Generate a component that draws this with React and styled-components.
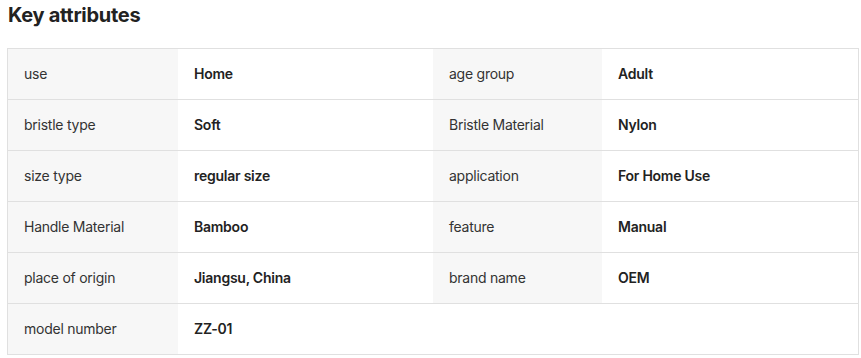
import React from "react";
import styled, { createGlobalStyle } from "styled-components";

const GlobalStyle = createGlobalStyle`
	body {
		margin: 0;
		background: #ffffff;
		font-family: Inter, "Noto Sans", sans-serif;
		color: #222222;
	}
`;

const Wrap = styled.div`
	padding: 0 4px 0 7px;
`;

const Title = styled.h2`
	margin: 0;
	padding: 2px 0 0 1px;
	font-size: 20px;
	line-height: 26px;
	font-weight: 700;
	color: #222222;
	letter-spacing: -0.3px;
`;

const Table = styled.div`
	margin-top: 20px;
	width: 850px;
	border: 1px solid #e0e0e0;
	border-bottom: none;
	display: grid;
	grid-template-columns: 170px 255px 169px 1fr;
`;

const Cell = styled.div`
	height: 50px;
	display: flex;
	align-items: center;
	padding: 0 0 2px 16px;
	box-sizing: border-box;
	height: 51px;
	font-size: 14px;
	letter-spacing: -0.25px;
	border-bottom: 1px solid #e0e0e0;
	background: ${p => (p.$label ? "#f7f7f7" : "#ffffff")};
	color: ${p => (p.$label ? "#333333" : "#222222")};
	font-weight: ${p => (p.$label ? 400 : 600)};
`;

const rows = [
	["use", "Home", "age group", "Adult"],
	["bristle type", "Soft", "Bristle Material", "Nylon"],
	["size type", "regular size", "application", "For Home Use"],
	["Handle Material", "Bamboo", "feature", "Manual"],
	["place of origin", "Jiangsu, China", "brand name", "OEM"],
	["model number", "ZZ-01", null, null],
];

export default function App() {
	return (
		<>
			<GlobalStyle />
			<Wrap>
				<Title>Key attributes</Title>
				<Table>
					{rows.map((r, i) => (
						<React.Fragment key={i}>
							<Cell $label>{r[0]}</Cell>
							<Cell>{r[1]}</Cell>
							<Cell $label={r[2] !== null}>{r[2]}</Cell>
							<Cell>{r[3]}</Cell>
						</React.Fragment>
					))}
				</Table>
			</Wrap>
		</>
	);
}
